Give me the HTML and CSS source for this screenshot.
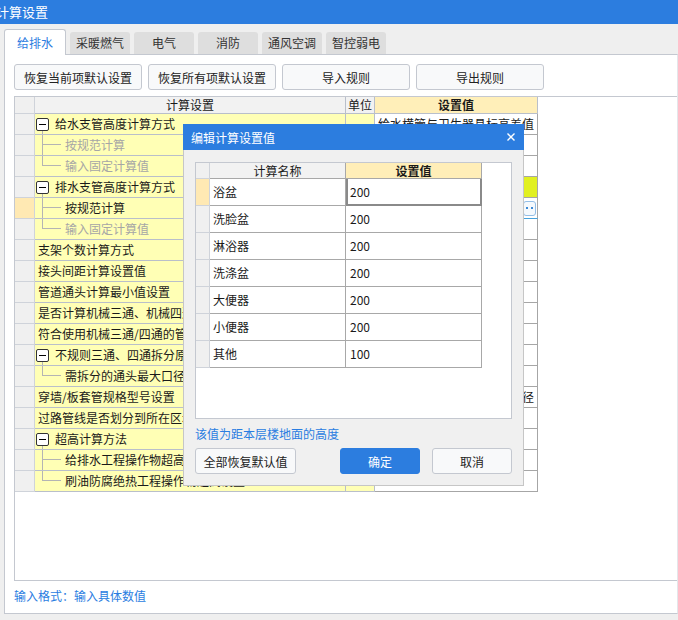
FILE: index.html
```html
<!DOCTYPE html>
<html lang="zh-CN">
<head>
<meta charset="utf-8">
<title>计算设置</title>
<link rel="stylesheet" href="styles.css">
</head>
<body>
<div class="titlebar"><span class="title">计算设置</span></div>
<div class="tabs">
  <div class="tab active">给排水</div>
  <div class="tab">采暖燃气</div>
  <div class="tab">电气</div>
  <div class="tab">消防</div>
  <div class="tab">通风空调</div>
  <div class="tab">智控弱电</div>
</div>
<div class="panel">
  <div class="toolbar">
    <button class="btn">恢复当前项默认设置</button>
    <button class="btn">恢复所有项默认设置</button>
    <button class="btn">导入规则</button>
    <button class="btn">导出规则</button>
  </div>
  <div class="gridbox">
    <div class="grid">
      <div class="rh hd"></div><div class="hd">计算设置</div><div class="hd">单位</div><div class="hd hv">设置值</div>

      <div class="rh"></div><div class="name"><span class="tog"></span><span class="tx">给水支管高度计算方式</span></div><div class="unit"></div><div class="val">给水横管与卫生器具标高差值</div>
      <div class="rh"></div><div class="name child dis"><span class="branch"></span>按规范计算</div><div class="unit"></div><div class="val"></div>
      <div class="rh"></div><div class="name child last dis"><span class="branch"></span>输入固定计算值</div><div class="unit"></div><div class="val"></div>
      <div class="rh"></div><div class="name"><span class="tog"></span><span class="tx">排水支管高度计算方式</span></div><div class="unit"></div><div class="val lime"></div>
      <div class="rh sel"></div><div class="name child"><span class="branch"></span>按规范计算</div><div class="unit"></div><div class="val edit"><span class="dots"><svg width="7" height="2" viewBox="0 0 7 2"><rect x="0" y="0" width="2" height="2" fill="#3d8ad6"/><rect x="5" y="0" width="2" height="2" fill="#3d8ad6"/></svg></span></div>
      <div class="rh"></div><div class="name child last dis"><span class="branch"></span>输入固定计算值</div><div class="unit"></div><div class="val"></div>
      <div class="rh"></div><div class="name plain">支架个数计算方式</div><div class="unit"></div><div class="val"></div>
      <div class="rh"></div><div class="name plain">接头间距计算设置值</div><div class="unit"></div><div class="val"></div>
      <div class="rh"></div><div class="name plain">管道通头计算最小值设置</div><div class="unit"></div><div class="val"></div>
      <div class="rh"></div><div class="name plain">是否计算机械三通、机械四通</div><div class="unit"></div><div class="val"></div>
      <div class="rh"></div><div class="name plain">符合使用机械三通/四通的管道规格</div><div class="unit"></div><div class="val"></div>
      <div class="rh"></div><div class="name"><span class="tog"></span><span class="tx">不规则三通、四通拆分原则</span></div><div class="unit"></div><div class="val"></div>
      <div class="rh"></div><div class="name child last"><span class="branch"></span>需拆分的通头最大口径</div><div class="unit"></div><div class="val"></div>
      <div class="rh"></div><div class="name plain">穿墙/板套管规格型号设置</div><div class="unit"></div><div class="val">按比管道大一级的规格取管径</div>
      <div class="rh"></div><div class="name plain">过路管线是否划分到所在区域</div><div class="unit"></div><div class="val"></div>
      <div class="rh"></div><div class="name"><span class="tog"></span><span class="tx">超高计算方法</span></div><div class="unit"></div><div class="val"></div>
      <div class="rh"></div><div class="name child"><span class="branch"></span>给排水工程操作物超高设置值</div><div class="unit"></div><div class="val"></div>
      <div class="rh"></div><div class="name child last"><span class="branch"></span>刷油防腐绝热工程操作物超高设置</div><div class="unit"></div><div class="val"></div>
    </div>
  </div>
  <div class="hint">输入格式：输入具体数值</div>
</div>

<div class="dialog">
  <div class="dlg-title">
    <span>编辑计算设置值</span>
    <svg class="close" width="8" height="8" viewBox="0 0 8 8"><path d="M0.5 0.5 L7.5 7.5 M7.5 0.5 L0.5 7.5" stroke="#fff" stroke-width="1.4" fill="none"/></svg>
  </div>
  <div class="dlg-body">
    <div class="dlg-gridbox">
      <div class="dgrid">
        <div class="drh dhd"></div><div class="dhd">计算名称</div><div class="dhd dhv">设置值</div>
        <div class="drh sel"></div><div class="dname">浴盆</div><div class="dval cur">200</div>
        <div class="drh"></div><div class="dname">洗脸盆</div><div class="dval">200</div>
        <div class="drh"></div><div class="dname">淋浴器</div><div class="dval">200</div>
        <div class="drh"></div><div class="dname">洗涤盆</div><div class="dval">200</div>
        <div class="drh"></div><div class="dname">大便器</div><div class="dval">200</div>
        <div class="drh"></div><div class="dname">小便器</div><div class="dval">200</div>
        <div class="drh"></div><div class="dname">其他</div><div class="dval">100</div>
      </div>
    </div>
    <div class="note">该值为距本层楼地面的高度</div>
    <div class="dlg-btns">
      <button class="dbtn wide">全部恢复默认值</button>
      <button class="dbtn primary">确定</button>
      <button class="dbtn">取消</button>
    </div>
  </div>
</div>
</body>
</html>
```

FILE: styles.css
```css
* { box-sizing: border-box; }
html, body { margin: 0; padding: 0; }
body {
  width: 678px;
  height: 620px;
  overflow: hidden;
  position: relative;
  background: #efefef;
  font-family: "Noto Sans CJK SC", "Microsoft YaHei", sans-serif;
  font-size: 12px;
  color: #1a1a1a;
}

.titlebar {
  height: 24px;
  background: #2c7ddf;
  color: #fff;
  font-size: 13px;
  line-height: 24px;
  text-indent: -4px;
  white-space: nowrap;
}

.tabs {
  display: flex;
  align-items: flex-end;
  height: 30px;
  padding-left: 4px;
  gap: 4px;
}
.tab {
  width: 60px;
  height: 22px;
  background: #dedede;
  border-radius: 3px 3px 0 0;
  text-align: center;
  line-height: 22px;
  color: #333;
}
.tab.active {
  width: 62px;
  height: 26px;
  margin-bottom: -1px;
  background: #fff;
  border: 1px solid #c4c8d0;
  border-bottom: none;
  color: #2c7ddf;
  line-height: 25px;
  position: relative;
  z-index: 1;
}

.panel {
  margin-left: 4px;
  width: 674px;
  height: 560px;
  border: 1px solid #c4c8d0;
  border-right-color: #e4e6ea;
  background: #fff;
  padding: 9px 0 9px 9px;
  display: flex;
  flex-direction: column;
}
.toolbar {
  display: flex;
  gap: 6px;
  height: 26px;
  margin-bottom: 6px;
}
.btn {
  width: 128px;
  height: 26px;
  padding: 0;
  border: 1px solid #c4c8d0;
  border-radius: 3px;
  background: #f8f9fa;
  font: inherit;
  color: #222;
}
.gridbox {
  height: 485px;
  border: 1px solid #c4c8d0;
  border-right: none;
  background: #fff;
}
.hint {
  margin-top: 7px;
  line-height: 16px;
  color: #2a7de1;
}

/* main grid */
.grid {
  display: grid;
  grid-template-columns: 20px 311px 29px 163px;
  grid-template-rows: 17px;
  grid-auto-rows: 21px;
}
.grid > div {
  border-right: 1px solid #b9bfca;
  border-bottom: 1px solid #b9bfca;
  line-height: 20px;
  white-space: nowrap;
  overflow: hidden;
}
.grid .hd {
  background: #f2f2f2;
  text-align: center;
  line-height: 16px;
}
.grid .hv {
  background: #ffefb9;
  font-weight: bold;
}
.grid .rh { background: #f0f0f0; border-color: #cfd3da; }
.grid .rh.sel { background: #ffe9b3; }
.grid .name {
  background: #ffffb5;
  display: flex;
  align-items: center;
  padding-left: 1px;
}
.grid .name.plain { padding-left: 3px; }
.grid .unit { background: #ffffb5; }
.grid .val {
  background: #fff;
  border-color: #a6a6a6;
  padding-left: 3px;
}
.grid .val.lime { background: #e1f021; }
.grid .val.edit {
  border-bottom-color: #45a1dc;
  display: flex;
  justify-content: flex-end;
  align-items: center;
  padding-right: 1px;
}
.dots {
  width: 13px;
  height: 15px;
  border: 1px solid #94bee6;
  border-radius: 3px;
  background: #f5f9fd;
  display: flex;
  align-items: center;
  justify-content: center;
}
.dots svg { display: block; }

.tog {
  flex: none;
  width: 13px;
  height: 13px;
  border: 1px solid #333;
  border-radius: 2px;
  background: #fff;
  position: relative;
}
.tog::before {
  content: "";
  position: absolute;
  left: 2px;
  right: 2px;
  top: 5px;
  height: 1px;
  background: #000;
}
.tog::after {
  content: "";
  position: absolute;
  left: 5px;
  top: 12px;
  width: 1px;
  height: 6px;
  background: #b4b4b4;
}
.tx { margin-left: 6px; }

.grid .name.child {
  padding-left: 7px;
  align-items: stretch;
}
.branch {
  flex: none;
  width: 19px;
  margin-right: 4px;
  background:
    linear-gradient(#b4b4b4, #b4b4b4) 0 0 / 1px 100% no-repeat,
    linear-gradient(#b4b4b4, #b4b4b4) 0 9px / 100% 1px no-repeat;
}
.child.last .branch {
  background:
    linear-gradient(#b4b4b4, #b4b4b4) 0 0 / 1px 10px no-repeat,
    linear-gradient(#b4b4b4, #b4b4b4) 0 9px / 100% 1px no-repeat;
}
.child.dis { color: #a6a6a6; }

/* dialog */
.dialog {
  position: absolute;
  left: 183px;
  top: 124px;
  width: 341px;
}
.dlg-title {
  height: 26px;
  background: #2c7ddf;
  color: #fff;
  display: flex;
  align-items: center;
  justify-content: space-between;
  padding: 0 9px 0 8px;
}
.close { display: block; }
.dlg-body {
  background: #f0f0f0;
  border: 1px solid #c6c6c6;
  border-top: none;
  padding: 12px 11px 11px;
}
.dlg-gridbox {
  height: 257px;
  border: 1px solid #c4c8d0;
  background: #fff;
}
.dgrid {
  display: grid;
  grid-template-columns: 14px 136px 136px;
  grid-template-rows: 16px;
  grid-auto-rows: 27px;
}
.dgrid > div {
  border-right: 1px solid #a8a8a8;
  border-bottom: 1px solid #a8a8a8;
  white-space: nowrap;
  line-height: 26px;
}
.dgrid .dhd {
  background: #f2f2f2;
  text-align: center;
  line-height: 15px;
}
.dgrid .dhv { background: #ffeeb8; font-weight: bold; }
.dgrid .drh { background: #f0f0f0; border-color: #cfd3da; }
.dgrid .drh.sel { background: #ffe9b3; }
.dgrid .dname { padding-left: 3px; }
.dgrid .dval { padding-left: 4px; }
.dgrid .dval.cur {
  border-right: 2px solid #8a8a8a;
  border-bottom: 2px solid #8a8a8a;
  box-shadow: inset 2px 0 #8a8a8a;
  line-height: 25px;
}
.note {
  margin-top: 7px;
  line-height: 16px;
  color: #2a7de1;
}
.dlg-btns {
  display: flex;
  gap: 12px;
  margin-top: 6px;
}
.dbtn {
  width: 80px;
  height: 26px;
  padding: 0;
  border: 1px solid #c4c8d0;
  border-radius: 3px;
  background: #f8f9fa;
  font: inherit;
  color: #222;
}
.dbtn.wide { width: 101px; }
.dbtn.primary {
  margin-left: auto;
  background: #2c7ddf;
  border-color: #2c7ddf;
  color: #fff;
}
```
